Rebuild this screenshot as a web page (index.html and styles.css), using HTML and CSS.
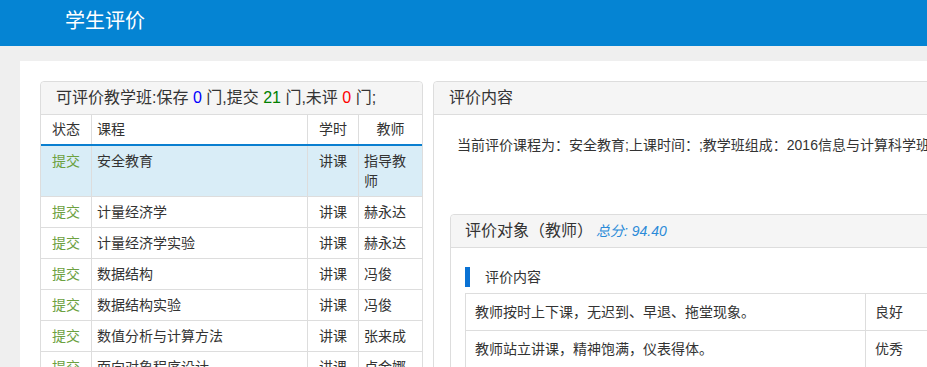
FILE: index.html
```html
<!DOCTYPE html>
<html lang="zh-CN">
<head>
  <meta charset="UTF-8" />
  <title>学生评价</title>
  <link rel="stylesheet" href="styles.css">
</head>
<body>

<div class="topbar">
  <h1>学生评价</h1>
</div>

<div class="main">
  <div class="card">

    <!-- 左侧：教学班列表 -->
    <div class="panel panel-left">
      <div class="panel-heading">
        可评价教学班:保存 <span class="num-save">0</span> 门,提交 <span class="num-submit">21</span> 门,未评 <span class="num-none">0</span> 门;
      </div>
      <table class="course-table">
        <thead>
          <tr>
            <th class="col-state">状态</th>
            <th class="col-name">课程</th>
            <th class="col-hour">学时</th>
            <th class="col-teacher">教师</th>
          </tr>
        </thead>
        <tbody>
          <tr class="active">
            <td class="state">提交</td>
            <td>安全教育</td>
            <td class="hour">讲课</td>
            <td>指导教师</td>
          </tr>
          <tr>
            <td class="state">提交</td>
            <td>计量经济学</td>
            <td class="hour">讲课</td>
            <td>赫永达</td>
          </tr>
          <tr>
            <td class="state">提交</td>
            <td>计量经济学实验</td>
            <td class="hour">讲课</td>
            <td>赫永达</td>
          </tr>
          <tr>
            <td class="state">提交</td>
            <td>数据结构</td>
            <td class="hour">讲课</td>
            <td>冯俊</td>
          </tr>
          <tr>
            <td class="state">提交</td>
            <td>数据结构实验</td>
            <td class="hour">讲课</td>
            <td>冯俊</td>
          </tr>
          <tr>
            <td class="state">提交</td>
            <td>数值分析与计算方法</td>
            <td class="hour">讲课</td>
            <td>张来成</td>
          </tr>
          <tr>
            <td class="state">提交</td>
            <td>面向对象程序设计</td>
            <td class="hour">讲课</td>
            <td>卢金娜</td>
          </tr>
        </tbody>
      </table>
    </div>

    <!-- 右侧：评价内容 -->
    <div class="panel panel-right">
      <div class="panel-heading">评价内容</div>
      <div class="panel-body">
        <p class="course-info">当前评价课程为：安全教育;上课时间：;教学班组成：2016信息与计算科学班</p>

        <div class="panel panel-inner">
          <div class="panel-heading">
            评价对象（教师）<span class="total">总分: 94.40</span>
          </div>
          <div class="panel-body inner-body">
            <div class="section-title">评价内容</div>
            <table class="eval-table">
              <tr>
                <td class="item">教师按时上下课，无迟到、早退、拖堂现象。</td>
                <td>良好</td>
              </tr>
              <tr>
                <td class="item">教师站立讲课，精神饱满，仪表得体。</td>
                <td>优秀</td>
              </tr>
            </table>
          </div>
        </div>
      </div>
    </div>

  </div>
</div>

</body>
</html>
```

FILE: styles.css
```css
html, body {
  overflow: hidden;
}
body {
  margin: 0;
  background: #efefef;
  font-family: "Liberation Sans", "Noto Sans CJK SC", sans-serif;
  font-size: 14px;
  line-height: 20px;
  color: #333;
}
.topbar {
  height: 46px;
  background: #0584d3;
  padding-left: 65px;
}
.topbar h1 {
  margin: 0;
  font-size: 20px;
  font-weight: normal;
  line-height: 42px;
  color: #fff;
}
.main {
  padding: 15px 0 0 20px;
}
.card {
  display: flex;
  gap: 10px;
  width: 1200px;
  padding: 20px 0 0 20px;
  background: #fff;
}
.panel {
  border: 1px solid #ddd;
  border-radius: 4px;
  background: #fff;
}
.panel-heading {
  height: 32px;
  line-height: 32px;
  padding: 0 15px;
  font-size: 16px;
  background: #f5f5f5;
  border-bottom: 1px solid #ddd;
  border-radius: 4px 4px 0 0;
}
.panel-left {
  width: 381px;
  flex: none;
}
.num-save { color: #0000ff; }
.num-submit { color: #008000; }
.num-none { color: #ff0000; }

.course-table {
  width: 100%;
  border-collapse: collapse;
}
.course-table th,
.course-table td {
  padding: 5px 5px;
  border: 1px solid #ddd;
  text-align: left;
  vertical-align: top;
  font-weight: normal;
}
.course-table th {
  padding-top: 4px;
  text-align: center;
  border-top: none;
  border-bottom: 2px solid #0a7fd0;
}
.course-table tr > :first-child { border-left: none; }
.course-table tr > :last-child { border-right: none; }
.course-table .col-state { width: 40px; }
.course-table .col-hour { width: 40px; }
.course-table .col-teacher { width: 53px; }
.course-table .col-name { text-align: left; }
.course-table .state {
  text-align: center;
  color: #6ca13f;
}
.course-table .hour { text-align: center; }
.course-table .active td {
  background: #d9edf7;
}

.panel-right {
  flex: 1;
}
.panel-right > .panel-body {
  padding: 20px 16px;
}
.course-info {
  margin: 0 0 59px;
  padding-left: 7px;
}
.panel-inner .panel-heading {
  padding-left: 14px;
}
.total {
  margin-left: 3px;
  font-size: 14px;
  font-style: italic;
  color: #2a8ad8;
}
.inner-body {
  padding: 19px 14px 20px;
}
.section-title {
  border-left: 5px solid #0a72d4;
  padding-left: 15px;
  margin-bottom: 6px;
}
.eval-table {
  border-collapse: collapse;
  width: 100%;
}
.eval-table td {
  padding: 8px 9px;
  border: 1px solid #ddd;
}
.eval-table .item {
  width: 381px;
}
```
